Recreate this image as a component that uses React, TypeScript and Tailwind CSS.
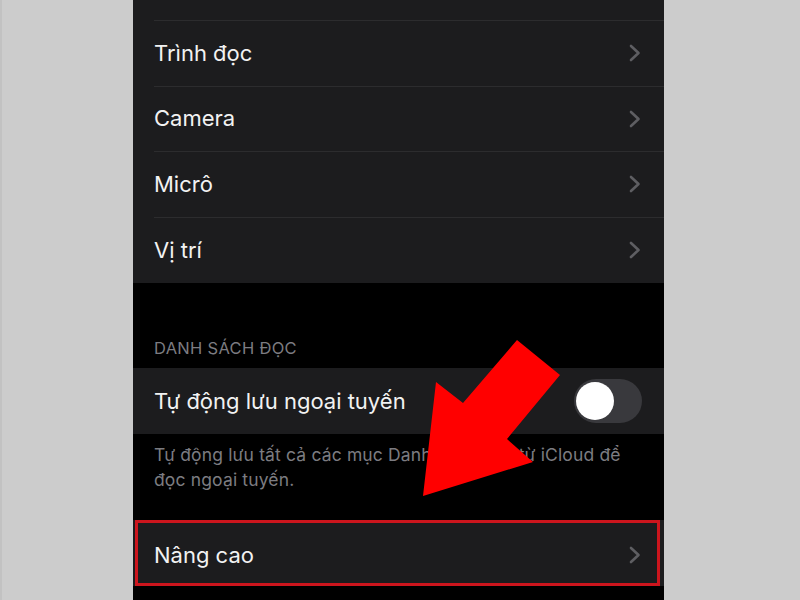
import React from "react";

const font = { fontFamily: 'Inter, "Noto Sans", "DejaVu Sans", sans-serif' };

function Chevron() {
  return (
    <svg width="12" height="18" viewBox="0 0 12 18" className="shrink-0">
      <polyline points="2,2 9.5,9 2,16" fill="none" stroke="#5e5e62" strokeWidth="2.6" strokeLinecap="round" strokeLinejoin="round" />
    </svg>
  );
}

function Row({ label, last }: { label: string; last?: boolean }) {
  return (
    <div className="flex h-[65.5px] items-center pl-[21px]">
      <div className={"flex h-full flex-1 items-center pr-[23px] " + (last ? "" : "border-b border-[#2c2c2e]")}>
        <span className="flex-1 text-[22px] text-[#f2f2f2]">{label}</span>
        <Chevron />
      </div>
    </div>
  );
}

export default function App() {
  return (
    <div className="relative flex h-[600px] w-[800px] overflow-hidden bg-[#cccccc]" style={font}>
      <div className="w-[133px] shrink-0 border-l-2 border-[#c2c2c2]" />
      <div className="flex w-[531px] shrink-0 flex-col bg-black">
        <div className="bg-[#1c1c1e]">
          <div className="ml-[21px] h-[21px] border-b border-[#2c2c2e]" />
          <Row label="Trình đọc" />
          <Row label="Camera" />
          <Row label="Micrô" />
          <Row label="Vị trí" last />
        </div>
        <div className="flex h-[85px] items-end pb-[7px] pl-[21px]">
          <span className="text-[16.5px] tracking-[0.3px] text-[#7c7c81]">DANH SÁCH ĐỌC</span>
        </div>
        <div className="flex h-[66px] items-center bg-[#1c1c1e] pl-[21px] pr-[22px]">
          <span className="flex-1 text-[22px] text-[#f2f2f2]">Tự động lưu ngoại tuyến</span>
          <div className="flex h-[44px] w-[68px] items-center rounded-full bg-[#39393d] px-[2px]">
            <div className="h-[38px] w-[38px] rounded-full bg-white" />
          </div>
        </div>
        <div className="h-[86px] pl-[21px] pr-[24px] pt-[8px] text-[17.5px] leading-[25px] tracking-[0.15px] text-[#7c7c81]">
          Tự động lưu tất cả các mục Danh sách đọc từ iCloud để đọc ngoại tuyến.
        </div>
        <div className="relative flex h-[66px] items-center bg-[#1c1c1e] pl-[21px] pr-[23px] pt-[4px]">
          <span className="flex-1 text-[22px] text-[#f2f2f2]">Nâng cao</span>
          <Chevron />
          <div className="absolute bottom-0 left-[2px] right-[4px] top-0 border-[3px] border-[#cc151d]" />
        </div>
      </div>
      <div className="flex-1" />
      <svg className="absolute left-0 top-0" width="800" height="600" viewBox="0 0 800 600">
        <polygon
          points="517,340 560,375 507,439 533,462 423,496 436,382 463,403"
          fill="#ff0000"
        />
      </svg>
    </div>
  );
}
